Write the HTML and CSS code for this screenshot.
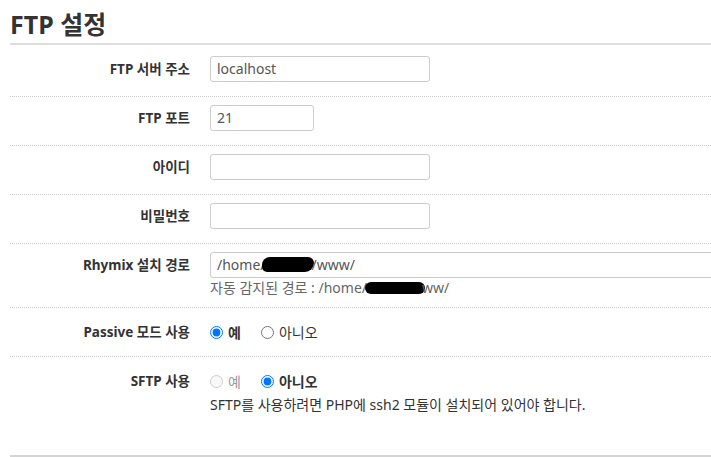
FILE: index.html
```html
<!DOCTYPE html>
<html lang="ko">
<head>
<meta charset="utf-8">
<title>FTP 설정</title>
<link rel="stylesheet" href="styles.css">
</head>
<body>
<div class="page">
  <h1 class="title">FTP 설정</h1>
  <div class="form">
    <div class="row">
      <div class="label">FTP 서버 주소</div>
      <div class="control"><div class="input wide">localhost</div></div>
    </div>
    <div class="row">
      <div class="label">FTP 포트</div>
      <div class="control"><div class="input short">21</div></div>
    </div>
    <div class="row">
      <div class="label">아이디</div>
      <div class="control"><div class="input wide"></div></div>
    </div>
    <div class="row">
      <div class="label">비밀번호</div>
      <div class="control"><div class="input wide"></div></div>
    </div>
    <div class="row row-help">
      <div class="label">Rhymix 설치 경로</div>
      <div class="control">
        <div class="input full">/home/<span class="blob blob-input"></span>/www/</div>
        <p class="help muted">자동 감지된 경로 : /home/<span class="blob blob-help"></span>ww/</p>
      </div>
    </div>
    <div class="row row-radio">
      <div class="label">Passive 모드 사용</div>
      <div class="control">
        <div class="radios">
          <label class="radio checked"><input type="radio" name="passive" checked>예</label>
          <label class="radio"><input type="radio" name="passive">아니오</label>
        </div>
      </div>
    </div>
    <div class="row row-radio last">
      <div class="label">SFTP 사용</div>
      <div class="control">
        <div class="radios">
          <label class="radio disabled"><input type="radio" name="sftp" disabled>예</label>
          <label class="radio checked"><input type="radio" name="sftp" checked>아니오</label>
        </div>
        <p class="help">SFTP를 사용하려면 PHP에 ssh2 모듈이 설치되어 있어야 합니다.</p>
      </div>
    </div>
  </div>
  <div class="footer"></div>
</div>
</body>
</html>
```

FILE: styles.css
```css
html, body {
  margin: 0;
  padding: 0;
  background: #fff;
}
body {
  font-family: "Noto Sans", "Noto Sans CJK KR", sans-serif;
  color: #333;
  font-size: 13px;
  overflow: hidden;
}
.page {
  padding: 0 0 0 10px;
  overflow: hidden;
}
.title {
  margin: 0 0 2px;
  padding: 5px 0 0;
  height: 38px;
  line-height: 38px;
  font-size: 25px;
  font-weight: bold;
  color: #333;
  border-bottom: 2px solid #ddd;
}
.row {
  display: grid;
  grid-template-columns: 180px 1fr;
  column-gap: 20px;
  padding: 8px 0 14px;
  border-bottom: 1px dotted #ccc;
}
.row:first-child {
  padding-top: 9px;
}
.label {
  text-align: right;
  font-weight: bold;
  line-height: 26px;
  font-size: 13.5px;
  color: #333;
  white-space: nowrap;
}
.control {
  min-width: 0;
}
.input {
  box-sizing: border-box;
  height: 26px;
  line-height: 24px;
  border: 1px solid #ccc;
  border-radius: 3px;
  padding: 0 6px;
  font-size: 14px;
  color: #555;
  background: #fff;
  white-space: nowrap;
}
.wide { width: 220px; }
.short { width: 104px; }
.full { width: 540px; }
.blob {
  display: inline-block;
  background: #000;
  vertical-align: middle;
}
.blob-input {
  width: 52px;
  height: 15px;
  margin: -3px -2px 0 -4px;
  border-radius: 8px 6px 9px 5px;
}
.blob-help {
  width: 60px;
  height: 12px;
  margin: -2px -3px 0 -2px;
  border-radius: 7px;
}
.help {
  margin: 0 0 -4px;
  line-height: 20px;
  font-size: 14px;
  color: #333;
  white-space: nowrap;
}
.help.muted {
  color: #666;
}
.row-help {
  padding-bottom: 13px;
}
.row-radio {
  padding: 11px 0 11px;
}
.radios {
  display: flex;
  gap: 20px;
  height: 26px;
  align-items: center;
}
.radio {
  display: flex;
  align-items: center;
  gap: 5px;
  font-size: 14px;
  color: #333;
}
.radio input {
  margin: 0;
  width: 13px;
  height: 13px;
}
.radio.checked {
  font-weight: bold;
}
.radio.disabled {
  color: #999;
}
.last {
  border-bottom: 0;
  padding-bottom: 40px;
}
.last .help {
  margin: 1px 0 0;
}
.footer {
  border-top: 2px solid #d4d4d4;
  height: 10px;
}
```
